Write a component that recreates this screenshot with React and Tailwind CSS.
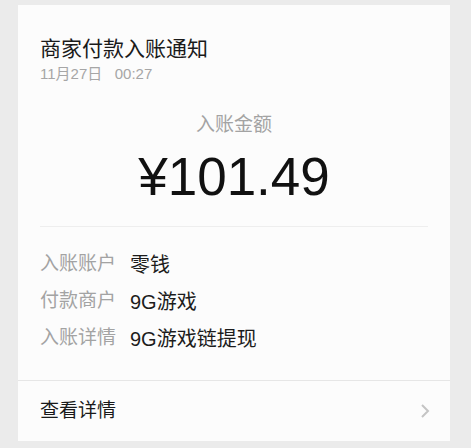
const cjk = { fontFamily: '"Liberation Sans", "Noto Sans CJK SC", sans-serif' }

function InfoRow({ label, value }) {
  return (
    <div className="flex items-center h-[37px]">
      <span className="w-[90px] text-[19px] text-[#a3a3a3]">{label}</span>
      <span className="text-[20px] text-[#1c1c1c]">{value}</span>
    </div>
  )
}

export default function App() {
  return (
    <div className="w-[471px] h-[448px] bg-[#ebebeb] pt-[5px] pl-[18px]" style={cjk}>
      <div className="w-[432px] h-[436px] bg-[#fcfcfc] flex flex-col">
        {/* Header */}
        <div className="px-[22px] pt-[30px]">
          <div className="text-[21px] leading-[28px] text-[#1a1a1a]">商家付款入账通知</div>
          <div className="text-[15px] leading-[20px] text-[#a6a6a6] mt-[1px]">
            11月27日&nbsp;&nbsp;&nbsp;00:27
          </div>
        </div>

        {/* Amount */}
        <div className="text-center mt-[28px] text-[19px] leading-[26px] text-[#a3a3a3]">入账金额</div>
        <div className="text-center mt-[9px] text-[53px] leading-[60px] text-[#111]">¥101.49</div>

        <div className="mx-[22px] mt-[19px] h-px bg-[#eeeeee]" />

        {/* Details */}
        <div className="px-[22px] pt-[19px]">
          <InfoRow label="入账账户" value="零钱" />
          <InfoRow label="付款商户" value="9G游戏" />
          <InfoRow label="入账详情" value="9G游戏链提现" />
        </div>

        <div className="flex-1" />

        {/* Footer */}
        <div className="border-t border-[#e6e6e6] h-[61px] flex items-center justify-between pl-[22px] pr-[20px]">
          <span className="text-[19px] text-[#1a1a1a]">查看详情</span>
          <svg width="10" height="16" viewBox="0 0 10 16" fill="none">
            <path d="M2 2l6 6-6 6" stroke="#c4c4c4" strokeWidth="2" />
          </svg>
        </div>
      </div>
    </div>
  )
}
